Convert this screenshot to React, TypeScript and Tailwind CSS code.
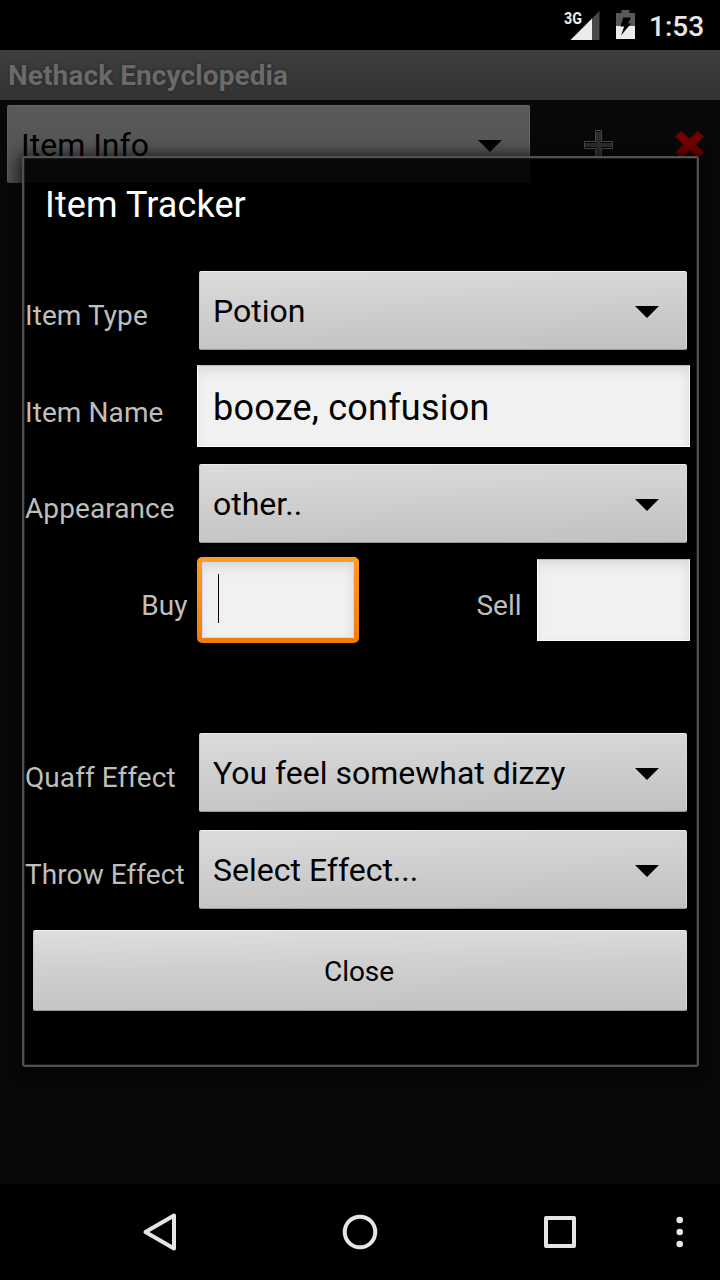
import type { ReactNode } from "react";

function StatusBar() {
  return (
    <header className="flex h-[50px] shrink-0 items-start justify-end bg-black pr-4">
      <svg className="mt-2 h-8 w-[36px]" width="36" height="32" viewBox="0 0 36 32">
        <path d="M35.500 3v29H28V10.500z" fill="#484848" />
        <path d="M28 10.500V32H6.500z" fill="#ececec" />
        <text x="0" y="15.800" fontSize="17.300" fontWeight="700" fontFamily="Roboto, sans-serif" fill="#ececec" textLength="18" lengthAdjust="spacingAndGlyphs" stroke="#000" strokeWidth="1" paintOrder="stroke">3G</text>
      </svg>
      <svg className="ml-4 mt-[9px] h-[31px] w-5" width="20" height="31" viewBox="0 0 20 31">
        <path d="M5.500 1h8v3h5.500v13H0V4h5.500z" fill="#595959" />
        <path d="M0 17h19v13H0z" fill="#ececec" />
        <path d="M7.200 8.500h7.600L12 14.500h3L5 26.500 8.200 17.500H4.500z" fill="#000" />
      </svg>
      <span className="mt-[11px] ml-[13px] w-[55px] text-[28px] leading-8 font-medium whitespace-nowrap text-[#e6e6e6]">1:53</span>
    </header>
  );
}

function Caret() {
  return (
    <svg className="h-3 w-6 shrink-0" width="24" height="12" viewBox="0 0 24 12">
      <path d="M0 0h24L12 12z" fill="#000" />
    </svg>
  );
}

function Spinner({ children }: { children: ReactNode }) {
  return (
    <div className="ml-px flex h-[79px] w-[488px] items-center justify-between rounded-[2px] border border-t-[#ededed] border-r-[#d8d8d8] border-b-[#999] border-l-[#c8c8c8] bg-[linear-gradient(178deg,#dcdcdc,#cfcfcf_45%,#c1c1c1)] pt-px pr-[27px] pl-[13px] text-[32px] leading-9 text-black">
      <span className="whitespace-nowrap">{children}</span>
      <span className="pt-[2px]">
        <Caret />
      </span>
    </div>
  );
}

function Field({ className, children }: { className: string; children?: ReactNode }) {
  return (
    <div
      className={`flex h-[82px] items-center border border-t-[#bbb] border-r-white border-b-white border-l-white bg-[#f1f1f1] shadow-[inset_0_8px_12px_-4px_#d8d8d8,inset_-4px_0_8px_-4px_#ddd] ${className}`}
    >
      {children}
    </div>
  );
}

function Row({ label, children }: { label: string; children: ReactNode }) {
  return (
    <div className="flex h-[96.6px] items-center">
      <div className="w-[173px] shrink-0 pt-[11.800px] text-[28px] leading-8 tracking-[0.08px] whitespace-nowrap text-[#bebebe]">{label}</div>
      {children}
    </div>
  );
}

function TrackerDialog() {
  return (
    <section className="absolute top-[156px] left-[22px] flex h-[911px] w-[677px] flex-col rounded-[3px] border-2 border-[#505050] bg-black/90 p-px shadow-[0_2px_14px_4px_rgba(0,0,0,0.65),inset_0_0_0_1px_#1c1c1c]">
      <h2 className="h-[103px] shrink-0 pt-[26px] pl-5 text-[36px] leading-10 tracking-[0.1px] text-white">Item Tracker</h2>
      <Row label="Item Type">
        <Spinner>Potion</Spinner>
      </Row>
      <Row label="Item Name">
        <Field className="-mt-px -ml-px w-[493px] pt-[3px] pl-[15px] text-[36px] tracking-[0.22px] text-black">booze, confusion</Field>
      </Row>
      <Row label="Appearance">
        <Spinner>other..</Spinner>
      </Row>
      <div className="flex h-[97px] items-center text-[28px] leading-8 text-[#bebebe]">
        <span className="w-[172px] pt-[11px] pr-[9.500px] text-right">Buy</span>
        <div className="h-[86px] w-[162px] rounded-[5px] bg-linear-to-b from-[#ff9c28] to-[#f07b08] p-[5px]">
          <Field className="h-[76px]! w-full border-[#c8dcee]! pb-1 pl-[15px]">
            <span className="h-[49px] w-px bg-black" />
          </Field>
        </div>
        <span className="w-[178px] pt-[11px] pr-[15.500px] text-right">Sell</span>
        <Field className="-mt-px w-[153px]" />
      </div>
      <div className="h-[75.500px] shrink-0" />
      <Row label="Quaff Effect">
        <Spinner>You feel somewhat dizzy</Spinner>
      </Row>
      <Row label="Throw Effect">
        <Spinner>Select Effect...</Spinner>
      </Row>
      <button className="mt-[12.600px] ml-[7.500px] h-[81px] w-[654px] shrink-0 rounded-[2px] border border-t-[#eee] border-r-[#d8d8d8] border-b-[#999] border-l-[#c8c8c8] bg-[linear-gradient(179deg,#dedede,#cfcfcf_45%,#c2c2c2)] pt-[3px] pr-px text-[28px] leading-8 tracking-[-0.1px] text-black">
        Close
      </button>
    </section>
  );
}

function NavigationBar() {
  return (
    <nav className="flex h-24 shrink-0 items-center bg-black">
      <svg className="ml-[140px] h-10 w-10" width="40" height="40" viewBox="0 0 40 40" fill="none" stroke="#e6e6e6" strokeWidth="4" strokeLinejoin="round">
        <path d="M34 3.500v33L5.500 20z" />
      </svg>
      <svg className="ml-[160px] h-10 w-10" width="40" height="40" viewBox="0 0 40 40" fill="none" stroke="#e6e6e6" strokeWidth="4">
        <circle cx="20" cy="20" r="15.300" />
      </svg>
      <svg className="ml-[160px] h-10 w-10" width="40" height="40" viewBox="0 0 40 40" fill="none" stroke="#e6e6e6" strokeWidth="4" strokeLinejoin="round">
        <rect x="6" y="6" width="28" height="28" />
      </svg>
      <svg className="ml-[90px] h-10 w-5" width="20" height="40" viewBox="0 0 20 40" fill="#e6e6e6">
        <circle cx="9.700" cy="8" r="3.300" />
        <circle cx="9.700" cy="20" r="3.300" />
        <circle cx="9.700" cy="32" r="3.300" />
      </svg>
    </nav>
  );
}

export default function App() {
  return (
    <div className="relative flex h-[1280px] w-[720px] flex-col overflow-hidden bg-[#080808] font-['Roboto',sans-serif]">
      <StatusBar />
      <div className="flex h-[50px] shrink-0 items-center bg-linear-to-b from-[#3e3e3e] to-[#333] pt-[2px] pl-2">
        <h1 className="text-[28px] leading-8 font-bold tracking-[0.09px] text-[#6a6a6a] [text-shadow:0_0_3px_#222]">Nethack Encyclopedia</h1>
      </div>
      <main className="flex grow items-start pt-[5px] pl-[7px]">
        <div className="flex h-[78px] w-[523px] items-center justify-between rounded-[2px] border border-t-[#686868] border-r-[#666] border-b-[#484848] border-l-[#5c5c5c] bg-linear-to-b from-[#5a5a5a] to-[#505050] pt-[2px] pr-[27px] pl-[13px] text-[32px] leading-9 text-black">
          <span>Item Info</span>
          <span className="pt-px">
            <Caret />
          </span>
        </div>
        <svg className="mt-6 ml-[53px] h-8 w-8" width="32" height="32" viewBox="0 0 32 32">
          <path d="M12.500 1.500h6v11h11v7h-11v11h-6v-11h-11v-7h11z" fill="#2c2c2c" stroke="#484848" />
          <path d="M13 2.500h5M2 13.500h11M18 13.500h11M2 18.500h11M18 18.500h11" stroke="#000" />
        </svg>
        <svg className="mt-[25px] ml-[60px] h-[30px] w-[30px]" width="30" height="30" viewBox="0 0 30 30">
          <path d="M6.200 0.800L14.500 8.500 22.800 0.800 29 6.800 20.800 14.500 29 22.200 22.800 28.200 14.500 20.500 6.200 28.200 0 22.200 8.200 14.500 0 6.800z" fill="#700000" />
        </svg>
      </main>
      <NavigationBar />
      <TrackerDialog />
    </div>
  );
}
